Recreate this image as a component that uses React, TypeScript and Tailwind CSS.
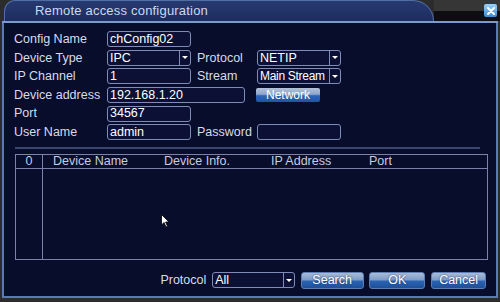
import React from 'react';

const font = "font-['Liberation_Sans',Arial,sans-serif]";

const TextBox: React.FC<{ value?: string; w: string }> = ({ value, w }) => (
  <div
    className={`${w} h-[16px] flex items-center px-[2px] rounded-[3px] border border-[#7d8db8] bg-[#0b1034] text-[12.5px] text-white leading-none`}
  >
    {value}
  </div>
);

const Select: React.FC<{ value: string; w: string; tight?: boolean }> = ({ value, w, tight }) => (
  <div
    className={`${w} h-[16px] flex items-stretch rounded-[3px] border border-[#7d8db8] bg-[#0b1034] text-white leading-none ${
      tight ? 'text-[12px] tracking-[-0.3px]' : 'text-[12.5px]'
    }`}
  >
    <div className="flex-1 flex items-center px-[2px] overflow-hidden whitespace-nowrap">{value}</div>
    <div className="w-[11px] border-l border-[#7d8db8] flex items-center justify-center">
      <div className="w-0 h-0 border-l-[3px] border-r-[3px] border-t-[3px] border-l-transparent border-r-transparent border-t-white" />
    </div>
  </div>
);

const GlossButton: React.FC<{ label: string; w: string }> = ({ label, w }) => (
  <div
    className={`${w} h-[17px] rounded-[3px] border border-[#5c7eb4] bg-[linear-gradient(to_bottom,#a9bcd8_0%,#7f9cc6_45%,#2a64b2_55%,#1d4f9a_100%)] flex items-center justify-center text-[12.5px] text-white leading-none [text-shadow:0_0_2px_#1a3060]`}
  >
    {label}
  </div>
);

const Row: React.FC<{ children: React.ReactNode }> = ({ children }) => (
  <div className="h-[18.6px] flex items-center">{children}</div>
);

const Label: React.FC<{ text: string; w: string }> = ({ text, w }) => (
  <div className={`${w} text-[12.5px] text-[#d6dbea] leading-none whitespace-nowrap`}>{text}</div>
);

export default function App() {
  return (
    <div className={`${font} w-[500px] h-[302px] bg-[#2c2c2c] flex flex-col overflow-hidden relative`}>
      {/* title bar */}
      <div className="h-[21px] flex">
        <div className="w-[430px] ml-[4px] rounded-tl-[14px] rounded-tr-[26px] border-t border-l border-r border-[#4f6ea6] bg-[linear-gradient(to_bottom,#273a70,#1c2c5e)] flex items-center pl-[30px]">
          <span className="text-[13px] text-[#cdd8f2] tracking-[0.2px]">Remote access configuration</span>
        </div>
        <div className="flex-1 flex flex-col">
          <div className="h-[11px] bg-[#363636]" />
          <div className="flex-1 bg-[#0e0e12]" />
        </div>
      </div>
      <div className="h-[2px] bg-[#7b9acc] mx-[2px]" />

      {/* body */}
      <div className="flex-1 mx-[2px] mb-[4px] border-l-2 border-r-2 border-b-2 border-[#5b7bb0] bg-[#090d2c] flex flex-col px-[10px] pt-[7px]">
        <Row>
          <Label text="Config Name" w="w-[93px]" />
          <TextBox value="chConfig02" w="w-[84px]" />
        </Row>
        <Row>
          <Label text="Device Type" w="w-[93px]" />
          <Select value="IPC" w="w-[84px]" />
          <div className="w-[6px]" />
          <Label text="Protocol" w="w-[60px]" />
          <Select value="NETIP" w="w-[84px]" />
        </Row>
        <Row>
          <Label text="IP Channel" w="w-[93px]" />
          <TextBox value="1" w="w-[84px]" />
          <div className="w-[6px]" />
          <Label text="Stream" w="w-[60px]" />
          <Select value="Main Stream" w="w-[84px]" tight />
        </Row>
        <Row>
          <Label text="Device address" w="w-[93px]" />
          <TextBox value="192.168.1.20" w="w-[138px]" />
          <div className="w-[11px]" />
          <div className="w-[64px] h-[14px] rounded-[2px] bg-[linear-gradient(to_bottom,#b4c2da_0%,#8ea6cc_45%,#2c66b6_55%,#1f55a4_100%)] flex items-center justify-center text-[12px] text-white leading-none">
            Network
          </div>
        </Row>
        <Row>
          <Label text="Port" w="w-[93px]" />
          <TextBox value="34567" w="w-[84px]" />
        </Row>
        <Row>
          <Label text="User Name" w="w-[93px]" />
          <TextBox value="admin" w="w-[84px]" />
          <div className="w-[6px]" />
          <Label text="Password" w="w-[60px]" />
          <TextBox w="w-[84px]" />
        </Row>

        {/* separator */}
        <div className="mt-[5px] mr-[6px] ml-[1px] h-[2px] bg-[#3b4670]" />

        {/* table */}
        <div className="mt-[5px] ml-[1px] w-[473px] h-[106px] border border-[#7a82aa] flex flex-col">
          <div className="h-[14px] border-b border-[#7a82aa] flex items-center text-[12.5px] text-[#c6cbe0] leading-none">
            <div className="w-[27px] h-full border-r border-[#7a82aa] flex items-center justify-center">0</div>
            <div className="w-[121px] pl-[10px]">Device Name</div>
            <div className="w-[107px]">Device Info.</div>
            <div className="w-[98px]">IP Address</div>
            <div>Port</div>
          </div>
          <div className="flex-1 flex">
            <div className="w-[27px] border-r border-[#7a82aa]" />
          </div>
        </div>

        {/* footer */}
        <div className="mt-[12px] flex items-center">
          <div className="w-[147px]" />
          <Label text="Protocol" w="w-[52px]" />
          <Select value="All" w="w-[83px]" />
          <div className="w-[6px]" />
          <GlossButton label="Search" w="w-[63px]" />
          <div className="w-[6px]" />
          <GlossButton label="OK" w="w-[56px]" />
          <div className="w-[6px]" />
          <GlossButton label="Cancel" w="w-[55px]" />
        </div>
      </div>

      {/* close button */}
      <div className="absolute left-[484px] top-[4px] w-[13px] h-[13px] rounded-[2px] bg-[linear-gradient(to_bottom,#9fd0f2,#3d8ad0)] flex items-center justify-center">
        <svg width="8" height="8" viewBox="0 0 8 8">
          <path d="M1 1L7 7M7 1L1 7" stroke="white" strokeWidth="2" strokeLinecap="round" />
        </svg>
      </div>

      {/* mouse cursor */}
      <svg className="absolute left-[161px] top-[214px]" width="9" height="14" viewBox="0 0 9 14">
        <path d="M0.5 0.5L0.5 11L3 8.5L5 13L6.5 12.3L4.6 8L8 8Z" fill="white" stroke="black" strokeWidth="0.8" />
      </svg>
    </div>
  );
}
